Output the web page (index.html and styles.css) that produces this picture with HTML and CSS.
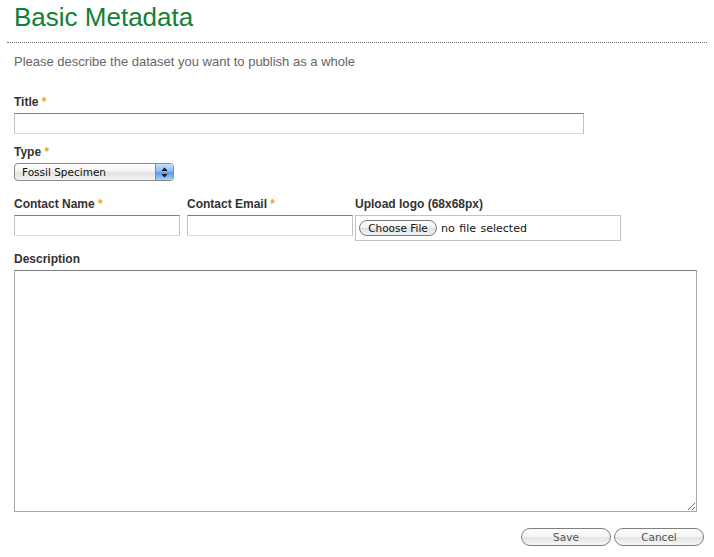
FILE: index.html
```html
<!DOCTYPE html>
<html lang="en">
<head>
<meta charset="utf-8">
<title>Basic Metadata</title>
<link rel="stylesheet" href="styles.css">
</head>
<body>
<div class="page">
  <h1 class="heading">Basic Metadata</h1>
  <p class="intro">Please describe the dataset you want to publish as a whole</p>
  <form class="form">
    <div class="field">
      <label class="label">Title <span class="req">*</span></label>
      <input class="text text-title" type="text">
    </div>
    <div class="field field-type">
      <label class="label">Type <span class="req">*</span></label>
      <div class="select">
        <span class="select-value">Fossil Specimen</span>
        <span class="select-btn">
          <svg width="7" height="11" viewBox="0 0 7 11"><path d="M3.5 0.5 L6.5 4 L0.5 4 Z" fill="#111"/><path d="M3.5 10.5 L6.5 7 L0.5 7 Z" fill="#111"/></svg>
        </span>
      </div>
    </div>
    <div class="row">
      <div class="field col-name">
        <label class="label">Contact Name <span class="req">*</span></label>
        <input class="text text-half" type="text">
      </div>
      <div class="field col-email">
        <label class="label">Contact Email <span class="req">*</span></label>
        <input class="text text-half" type="text">
      </div>
      <div class="field col-file">
        <label class="label">Upload logo (68x68px)</label>
        <div class="filebox">
          <span class="file-btn">Choose File</span>
          <span class="file-status">no file selected</span>
        </div>
      </div>
    </div>
    <div class="field">
      <label class="label">Description</label>
      <textarea class="textarea"></textarea>
    </div>
    <div class="actions">
      <button class="btn" type="button">Save</button>
      <button class="btn" type="button">Cancel</button>
    </div>
  </form>
</div>
</body>
</html>
```
FILE: styles.css
```css
html, body {
  margin: 0;
  padding: 0;
  background: #fff;
}
body {
  font-family: "Liberation Sans", Arial, sans-serif;
  color: #333;
}
.page {
  width: 700px;
  margin-left: 7px;
}
.heading {
  margin: 0;
  padding: 2px 7px 10px;
  font-size: 26px;
  line-height: 30px;
  font-weight: normal;
  color: #128033;
  border-bottom: 1px dotted #6e6e6e;
}
.intro {
  margin: 11px 7px 0;
  font-size: 13px;
  line-height: 16px;
  color: #666;
}
.form {
  margin: 25px 0 0 7px;
}
.field {
  margin-bottom: 11px;
}
.field-type {
  margin-bottom: 16px;
}
.label {
  display: block;
  font-size: 12px;
  line-height: 14px;
  font-weight: bold;
  color: #333;
  margin-bottom: 4px;
  white-space: nowrap;
}
.req {
  color: #f5a21e;
}
.text {
  display: block;
  box-sizing: border-box;
  height: 21px;
  margin: 0;
  padding: 0 3px;
  border: 1px solid;
  border-color: #808080 #c2c2c2 #dcdcdc #c2c2c2;
  background: #fff;
  font-family: inherit;
  font-size: 12px;
}
.text-title {
  width: 570px;
}
.text-half {
  width: 166px;
}
.select {
  position: relative;
  box-sizing: border-box;
  width: 160px;
  height: 18px;
  border: 1px solid #8a8a8a;
  border-radius: 4px;
  background: linear-gradient(#ffffff, #f2f2f2 45%, #e2e2e2 55%, #f4f4f4);
  display: flex;
  align-items: center;
  overflow: hidden;
}
.select-value {
  flex: 1;
  padding-left: 7px;
  font-family: "DejaVu Sans", "Lucida Grande", sans-serif;
  font-size: 10.5px;
  color: #111;
}
.select-btn {
  width: 17px;
  align-self: stretch;
  border-left: 1px solid #6d8fc0;
  background: linear-gradient(#c9e0fb, #8dbcf3 45%, #5a9ae8 55%, #a9d1fb);
  display: flex;
  align-items: center;
  justify-content: center;
}
.row {
  display: flex;
  align-items: flex-start;
}
.col-name {
  margin-right: 7px;
}
.col-email {
  margin-right: 2px;
}
.filebox {
  box-sizing: border-box;
  width: 266px;
  height: 26px;
  border: 1px solid #c2c2c2;
  display: flex;
  align-items: center;
  padding-left: 3px;
}
.file-btn {
  box-sizing: border-box;
  height: 16px;
  width: 78px;
  border: 1px solid #7a7a7a;
  border-radius: 8px;
  background: linear-gradient(#ffffff, #f1f1f1 50%, #e0e0e0 51%, #f3f3f3);
  font-family: "DejaVu Sans", "Lucida Grande", sans-serif;
  font-size: 10.5px;
  line-height: 14px;
  text-align: center;
  color: #111;
}
.file-status {
  margin-left: 4px;
  font-family: "DejaVu Sans", "Lucida Grande", sans-serif;
  font-size: 11px;
  color: #111;
  word-spacing: 1px;
}
.textarea {
  display: block;
  box-sizing: border-box;
  width: 683px;
  height: 242px;
  margin: 0;
  border: 1px solid;
  border-color: #7c7c7c #a8a8a8 #a8a8a8 #a8a8a8;
  background: #fff;
  font-family: inherit;
  font-size: 12px;
}
.actions {
  display: flex;
  justify-content: flex-end;
  gap: 3px;
  margin-top: 16px;
  margin-right: 3px;
}
.btn {
  box-sizing: border-box;
  width: 90px;
  height: 18px;
  margin: 0;
  padding: 0;
  border: 1px solid #7f7f7f;
  border-radius: 9px;
  background: linear-gradient(#ffffff, #f3f3f3 50%, #e4e4e4 51%, #f6f6f6);
  font-family: "DejaVu Sans", "Lucida Grande", sans-serif;
  font-size: 10.5px;
  line-height: 16px;
  color: #555;
}
```
